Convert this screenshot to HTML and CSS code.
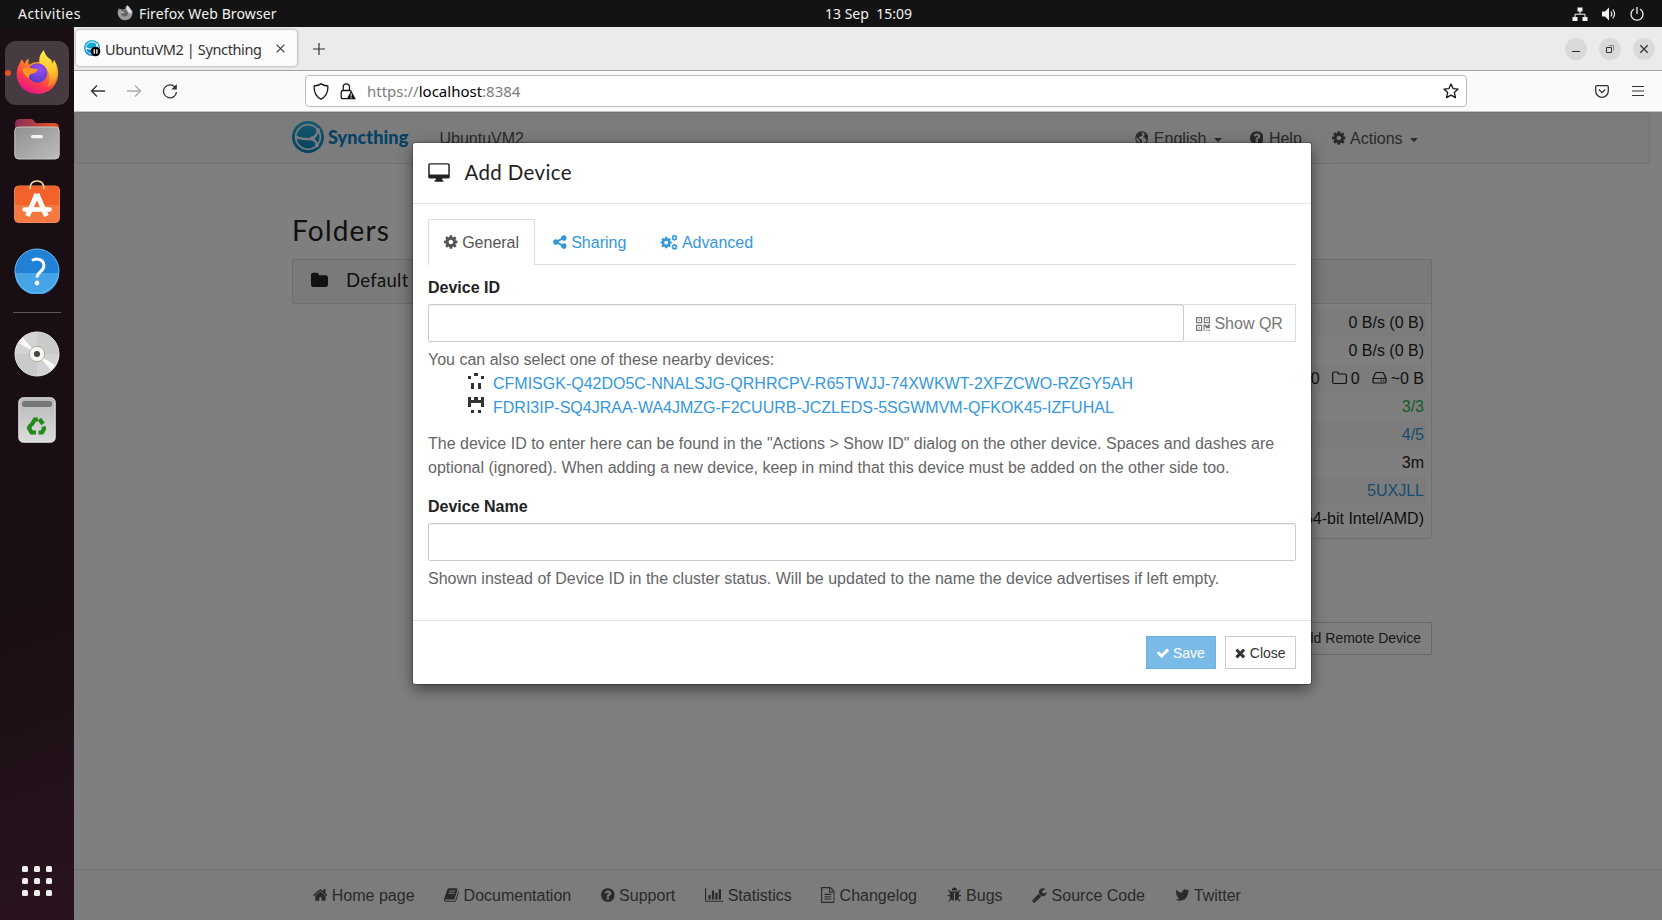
FILE: index.html
```html
<!DOCTYPE html>
<html lang="en">
<head>
<meta charset="utf-8">
<title>UbuntuVM2 | Syncthing</title>
<link rel="stylesheet" href="styles.css">
</head>
<body>
<svg class="defs" aria-hidden="true">
  <defs>
    <linearGradient id="syncBlue" gradientUnits="userSpaceOnUse" x1="0" y1="0" x2="0" y2="32"><stop offset="0" stop-color="#26b6db"/><stop offset="1" stop-color="#0882c8"/></linearGradient>
    <linearGradient id="foxBody" x1="0.8" y1="0" x2="0.3" y2="1"><stop offset="0" stop-color="#fff44f"/><stop offset=".35" stop-color="#ff9a1f"/><stop offset=".7" stop-color="#ff3d4a"/><stop offset="1" stop-color="#e0148c"/></linearGradient>
    <linearGradient id="foxFlame" x1="0" y1="0" x2="0" y2="1"><stop offset="0" stop-color="#fff04a"/><stop offset=".6" stop-color="#ffc02e"/><stop offset="1" stop-color="#ff7a2a"/></linearGradient>
    <radialGradient id="foxGlobe" cx=".6" cy=".3" r=".8"><stop offset="0" stop-color="#a04af5"/><stop offset="1" stop-color="#4a3cc0"/></radialGradient>
    <linearGradient id="folderBack" x1="0" y1="0" x2="1" y2="0"><stop offset="0" stop-color="#8a2c5a"/><stop offset="1" stop-color="#e9541f"/></linearGradient>
    <linearGradient id="folderFront" x1="0" y1="0" x2="1" y2="1"><stop offset="0" stop-color="#909090"/><stop offset="1" stop-color="#bcbcbc"/></linearGradient>
    <linearGradient id="trashBody" x1="0" y1="0" x2="0" y2="1"><stop offset="0" stop-color="#b8b8b8"/><stop offset="1" stop-color="#dcdcdc"/></linearGradient>
  </defs>
  <symbol id="cog" viewBox="128 0 1536 1792"><path d="M1152 896q0-106-75-181t-181-75-181 75-75 181 75 181 181 75 181-75 75-181zm512-109v222q0 12-8 23t-20 13l-185 28q-19 54-39 91 35 50 107 138 10 12 10 25t-9 23q-27 37-99 108t-94 71q-12 0-26-9l-138-108q-44 23-91 38-16 136-29 186-7 28-36 28h-222q-14 0-24.5-8.5t-11.5-21.5l-28-184q-49-16-90-37l-141 107q-10 9-25 9-14 0-25-11-126-114-165-168-7-10-7-23 0-12 8-23 15-21 51-66.5t54-70.5q-27-50-41-99l-183-27q-13-2-21-12.5t-8-23.5v-222q0-12 8-23t19-13l186-28q14-46 39-92-40-57-107-138-10-12-10-24 0-10 9-23 26-36 98.5-107.5t94.5-71.5q13 0 26 10l138 107q44-23 91-38 16-136 29-186 7-28 36-28h222q14 0 24.5 8.5t11.5 21.5l28 184q49 16 90 37l142-107q9-9 24-9 13 0 25 10 129 119 165 170 7 8 7 22 0 12-8 23-15 21-51 66.5t-54 70.5q26 50 41 98l183 28q13 2 21 12.5t8 23.5z"/></symbol>
  <symbol id="cogs" viewBox="0 0 1920 1792"><use href="#cog" x="0" y="210" width="1280" height="1493"/><use href="#cog" x="1230" y="20" width="690" height="805"/><use href="#cog" x="1230" y="1040" width="690" height="805"/></symbol>
  <symbol id="check" viewBox="121 0 1550 1792"><path d="M1671 566q0 40-28 68l-724 724-136 136q-28 28-68 28t-68-28l-136-136-362-362q-28-28-28-68t28-68l136-136q28-28 68-28t68 28l294 295 656-657q28-28 68-28t68 28l136 136q28 28 28 68z"/></symbol>
  <symbol id="times" viewBox="302 0 1188 1792"><path d="M1490 1322q0 40-28 68l-136 136q-28 28-68 28t-68-28l-294-294-294 294q-28 28-68 28t-68-28l-136-136q-28-28-28-68t28-68l294-294-294-294q-28-28-28-68t28-68l136-136q28-28 68-28t68 28l294 294 294-294q28-28 68-28t68 28l136 136q28 28 28 68t-28 68l-294 294 294 294q28 28 28 68z"/></symbol>
  <symbol id="question" viewBox="128 0 1536 1792"><path d="M1024 1376v-192q0-14-9-23t-23-9h-192q-14 0-23 9t-9 23v192q0 14 9 23t23 9h192q14 0 23-9t9-23zm256-672q0-88-55.5-163t-138.5-116-170-41q-243 0-371 213-15 24 8 42l132 100q7 6 19 6 16 0 25-12 53-68 86-92 34-24 86-24 48 0 85.5 26t37.5 59q0 38-20 61t-68 45q-63 28-115.5 86.5t-52.5 125.5v36q0 14 9 23t23 9h192q14 0 23-9t9-23q0-19 21.5-49.5t54.5-49.5q32-18 49-28.5t46-35 44.5-48 28-60.5 12.5-81zm384 192q0 209-103 385.5t-279.5 279.5-385.5 103-385.5-103-279.5-279.5-103-385.5 103-385.5 279.5-279.5 385.5-103 385.5 103 279.5 279.5 103 385.5z"/></symbol>
  <symbol id="home" viewBox="64 0 1664 1792"><path d="M1472 992v480q0 26-19 45t-45 19h-384v-384h-256v384h-384q-26 0-45-19t-19-45v-480q0-1 .5-3t.5-3l575-474 575 474q1 2 1 6zm223-69l-62 74q-8 9-21 11h-3q-13 0-21-7l-692-577-692 577q-12 8-24 7-13-2-21-11l-62-74q-8-10-7-23.5t11-21.5l719-599q32-26 76-26t76 26l244 204v-195q0-14 9-23t23-9h192q14 0 23 9t9 23v408l219 182q10 8 11 21.5t-7 23.5z"/></symbol>
  <symbol id="book" viewBox="64 0 1664 1792"><path d="M1703 478q40 57 18 129l-275 906q-19 64-76.5 107.5t-122.5 43.5h-923q-77 0-148.5-53.5t-99.5-131.5q-24-67-2-127 0-4 3-27t4-37q1-8-3-21.5t-3-19.5q2-11 8-21t16.5-23.5 16.5-23.5q23-38 45-91.5t30-91.5q3-10 .5-30t-.5-28q3-11 17-28t17-23q21-36 42-92t25-90q1-9-2.5-32t.5-28q4-13 22-30.5t22-22.5q19-26 42.5-84.5t27.5-96.5q1-8-3-25.5t-2-26.5q2-8 9-18t18-23 17-21q8-12 16.5-30.5t15-35 16-36 19.5-32 26.5-23.5 36-11.5 47.5 5.5l-1 3q38-9 51-9h761q74 0 114 56t18 130l-274 906q-36 119-71.5 153.5t-128.5 34.5h-869q-27 0-38 15-11 16-1 43 24 70 144 70h923q29 0 56-15.5t35-41.5l300-987q7-22 5-57 38 15 59 43zm-1064 2q-4 13 2 22.5t20 9.5h608q13 0 25.5-9.5t16.5-22.5l21-64q4-13-2-22.5t-20-9.5h-608q-13 0-25.5 9.5t-16.5 22.5zm-83 256q-4 13 2 22.5t20 9.5h608q13 0 25.5-9.5t16.5-22.5l21-64q4-13-2-22.5t-20-9.5h-608q-13 0-25.5 9.5t-16.5 22.5z"/></symbol>
  <symbol id="chart" viewBox="0 0 2048 1792"><path d="M640 896v512h-256v-512h256zm384-512v1024h-256v-1024h256zm1024 1152v128h-2048v-1536h128v1408h1920zm-640-896v768h-256v-768h256zm384-384v1152h-256v-1152h256z"/></symbol>
  <symbol id="filetext" viewBox="128 0 1536 1792"><path d="M1596 380q28 28 48 76t20 88v1152q0 40-28 68t-68 28h-1344q-40 0-68-28t-28-68v-1600q0-40 28-68t68-28h896q40 0 88 20t76 48zm-444-244v376h376q-10-29-22-41l-313-313q-12-12-41-22zm384 1528v-1024h-416q-40 0-68-28t-28-68v-416h-768v1536h1280zm-1024-864q0-14 9-23t23-9h704q14 0 23 9t9 23v64q0 14-9 23t-23 9h-704q-14 0-23-9t-9-23v-64zm736 224q14 0 23 9t9 23v64q0 14-9 23t-23 9h-704q-14 0-23-9t-9-23v-64q0-14 9-23t23-9h704zm0 256q14 0 23 9t9 23v64q0 14-9 23t-23 9h-704q-14 0-23-9t-9-23v-64q0-14 9-23t23-9h704z"/></symbol>
  <symbol id="bug" viewBox="64 0 1664 1792"><path d="M1696 960q0 26-19 45t-45 19h-224q0 171-67 290l208 209q19 19 19 45t-19 45q-18 19-45 19t-45-19l-198-197q-5 5-15 13t-42 28.5-65 36.5-82 29-97 13v-896h-128v896q-51 0-101.5-13.5t-87-33-66-39-43.5-32.5l-15-14-183 207q-20 21-48 21-24 0-43-16-19-18-20.5-44.5t15.5-46.5l202-227q-58-114-58-274h-224q-26 0-45-19t-19-45 19-45 45-19h224v-294l-173-173q-19-19-19-45t19-45 45-19 45 19l173 173h844l173-173q19-19 45-19t45 19 19 45-19 45l-173 173v294h224q26 0 45 19t19 45zm-480-576h-640q0-133 93.5-226.5t226.5-93.5 226.5 93.5 93.5 226.5z"/></symbol>
  <symbol id="wrench" viewBox="64 0 1664 1792"><path d="M448 1472q0-26-19-45t-45-19-45 19-19 45 19 45 45 19 45-19 19-45zm644-420l-682 682q-37 37-90 37-52 0-91-37l-106-108q-38-36-38-90 0-53 38-91l681-681q39 98 114.5 173.5t173.5 114.5zm634-435q0 39-23 106-47 134-164.5 217.5t-258.5 83.5q-185 0-316.5-131.5t-131.5-316.5 131.5-316.5 316.5-131.5q58 0 121.5 16.5t107.5 46.5q16 11 16 28t-16 28l-293 169v224l193 107q5-3 79-48.5t135.5-81 70.5-35.5q15 0 23.5 10t8.5 25z"/></symbol>
  <symbol id="twitter" viewBox="64 0 1664 1792"><path d="M1684 408q-67 98-162 167 1 14 1 42 0 130-38 259.5t-115.5 248.5-184.5 210.5-258 146-323 54.5q-271 0-496-145 35 4 78 4 225 0 401-138-105-2-188-64.5t-114-159.5q33 5 61 5 43 0 85-11-112-23-185.5-111.5t-73.5-205.5v-4q68 38 146 41-66-44-105-115t-39-154q0-88 44-163 121 149 294.5 238.5t371.5 99.5q-8-38-8-74 0-134 94.5-228.5t228.5-94.5q140 0 236 102 109-21 205-78-37 115-142 178 93-10 186-50z"/></symbol>
  <symbol id="share" viewBox="128 0 1536 1792"><path d="M1344 1024q133 0 226.5 93.5t93.5 226.5-93.5 226.5-226.5 93.5-226.5-93.5-93.5-226.5q0-12 2-34l-360-180q-92 86-218 86-133 0-226.5-93.5t-93.5-226.5 93.5-226.5 226.5-93.5q126 0 218 86l360-180q-2-22-2-34 0-133 93.5-226.5t226.5-93.5 226.5 93.5 93.5 226.5-93.5 226.5-226.5 93.5q-126 0-218-86l-360 180q2 22 2 34t-2 34l360 180q92-86 218-86z"/></symbol>
  <symbol id="folder" viewBox="64 0 1664 1792"><path d="M1728 608v704q0 92-66 158t-158 66h-1216q-92 0-158-66t-66-158v-960q0-92 66-158t158-66h320q92 0 158 66t66 158v32h672q92 0 158 66t66 158z"/></symbol>
  <symbol id="globe" viewBox="0 0 14 16"><circle cx="7" cy="8" r="6.200" fill="none" stroke="currentColor" stroke-width="1.200"/><path d="M2 4.500 4.500 2l3 .3-.5 1.500 1 1-1.500 1.400-2 .6L4 8.500l2.200.8 1.300 1.400-.7 1.800-.8 1.500-1-2.500L3.500 9 1.300 7ZM9 2.500l3 2 1 2.500-.6 2.500-1.200.8-.7-2.300L8.800 7.500 8.600 5.800 10 4.800Z"/></symbol>
  <symbol id="folder-o" viewBox="0 0 16 16"><path d="M.7 3.400Q.7 2 2.100 2H5q1.400 0 1.400 1.400v.6H13q1.400 0 1.400 1.400v6.700q0 1.400-1.400 1.400H2.100Q.7 13.500.7 12.100Z" fill="none" stroke="currentColor" stroke-width="1.200"/></symbol>
  <symbol id="hdd" viewBox="0 0 16 16"><path d="M1 8.500 3.400 3.200Q3.700 2.500 4.500 2.500h6q.8 0 1.100.7L14 8.500v3.400q0 1.100-1.100 1.100H2.100Q1 13 1 11.900ZM1 8.500h13" fill="none" stroke="currentColor" stroke-width="1.200"/><circle cx="9.200" cy="10.800" r=".8"/><circle cx="11.700" cy="10.800" r=".8"/></symbol>
  <symbol id="sync" viewBox="0 0 32 32"><circle cx="16" cy="16" r="16" fill="url(#syncBlue)"/><circle cx="16" cy="16" r="12.300" fill="none" stroke="#f8f8f8" stroke-width="1.700"/><path d="M20.500 17.600Q12 19.300 4.300 16M20.500 17.600Q25.500 14 26.300 8.500M20.500 17.600Q24.500 20.500 25.500 25" fill="none" stroke="#f8f8f8" stroke-width="2.300"/><g fill="#f8f8f8"><circle cx="20.300" cy="17.600" r="2.300"/><circle cx="26" cy="8.800" r="1.900"/><circle cx="24.800" cy="24.500" r="1.900"/><circle cx="5" cy="16.500" r="1.700"/></g></symbol>
  <symbol id="firefox" viewBox="0 0 44 46"><path d="M3.500 14 6 9.500l3 4.500q1-4 4-5l-.3 6Q18 12 24 12q-1-6 4-11 3 6 8 9l2 4 1-4q5 8 4 17Q40 43 23 45 6 45 1.500 30-1 21 3.500 14Z" fill="url(#foxBody)"/><path d="M28.500 0q1 6 7 11l2 5 .8-5q4.500 8 3.200 17-3 8-10 10 5-8 1.500-16-3-5-8-7-3-8 3.500-15Z" fill="url(#foxFlame)"/><circle cx="22" cy="23.500" r="10" fill="url(#foxGlobe)"/><path d="M6.500 20q4-3 9-1.500l7 1.500q-1 3.500-7 4.500-3 1.500-2 4.500-5-2-7-9Z" fill="#ff961f"/></symbol>
</svg>

<header class="topbar">
  <span class="activities">Activities</span>
  <svg class="app-icon" viewBox="0 0 44 46"><path d="M3 12 5 9l2.500 4L12 10v5q4-3 11-4-1-6 6-10 2 6 7 9l4 5 2-2q3 7 1 15Q39 43 23 44 7 44 2 29-1 20 3 12Z" fill="#999"/><circle cx="21" cy="23" r="10" fill="#666"/><path d="M29 1q14 12 11 24l-8-3q-9-7-3-21Z" fill="#ddd"/><path d="M7 20q5-3 15 0-3 4-9 4Z" fill="#bbb"/></svg>
  <span class="app-name">Firefox Web Browser</span>
  <span class="clock">13 Sep&nbsp; 15:09</span>
  <span class="tray">
    <svg width="16" height="16" viewBox="0 0 16 16"><path d="M5.500 1.500h5v4h-5ZM.5 11h5v4h-5ZM10.500 11h5v4h-5Z" fill="#f2f2f2"/><path d="M8 5v3M3 11V8.200h10V11" fill="none" stroke="#f2f2f2"/></svg>
    <svg width="16" height="16" viewBox="0 0 16 16"><path d="M1 5.500h3L8 1.500v13l-4-4H1Z" fill="#f2f2f2"/><path d="M9.800 5.500q2 2.500 0 5M11.800 3.500q3.500 4.500 0 9" fill="none" stroke="#f2f2f2" stroke-width="1.200"/></svg>
    <svg width="16" height="16" viewBox="0 0 16 16"><path d="M5 3A6 6 0 1 0 11 3M8 1v7" fill="none" stroke="#f2f2f2" stroke-width="1.300"/></svg>
  </span>
</header>

<div class="desktop">
  <nav class="dock">
    <div class="launcher running"><svg class="fox"><use href="#firefox"/></svg></div>
    <svg class="dock-icon files" viewBox="0 0 46 42"><path d="M1 6q0-5 5-5h12l4 4h18q5 0 5 5v15H1Z" fill="url(#folderBack)"/><rect x=".8" y="9" width="44.400" height="32" rx="4" fill="url(#folderFront)" stroke="#c8c8c8"/><rect x="17" y="17" width="12" height="3.200" rx="1.500" fill="#f4f4f4"/></svg>
    <svg class="dock-icon store" viewBox="0 0 46 43"><rect x=".6" y="6" width="44.800" height="36.500" rx="4" fill="#f4783f" stroke="#f58d62"/><path d="M1 25V10q0-4 4-4h36q4 0 4 4v15Z" fill="#f3622b"/><path d="M16 9q0-8 7-8t7 8" fill="none" stroke="#f8d9a0" stroke-width="1.600"/><path d="M22.900 14 13.500 36M22.900 14l9.500 22" fill="none" stroke="#fff" stroke-width="5"/><path d="M10.500 29.500h25" stroke="#fff" stroke-width="4.500" stroke-linecap="round"/></svg>
    <svg class="dock-icon help" viewBox="0 0 46 46"><circle cx="23" cy="23" r="22" fill="#2181d6"/><path d="M1 25a22 22 0 0 0 44 0Z" fill="#45a3e7"/><circle cx="23" cy="23" r="22" fill="none" stroke="#69bbf2"/><path d="M18 12.500q3-1.700 6-1.300 5.500.6 6 6 0 3.500-3.600 6.500-3.400 3-3.400 5.800" fill="none" stroke="#fff" stroke-width="3"/><circle cx="23" cy="35" r="2.400" fill="#fff"/></svg>
    <hr class="dock-rule">
    <svg class="dock-icon disc" viewBox="0 0 46 46"><circle cx="23" cy="23" r="22" fill="#d3d3d3" stroke="#eee"/><path d="M23 23V1A22 22 0 0 1 45 23ZM23 23v22A22 22 0 0 1 1 23Z" fill="#cacaca"/><path d="m23 23-18-11q1.500-3 4-5Zm0 0 18 11q-1.500 3-4 5Z" fill="#fafafa"/><circle cx="23" cy="23" r="7.700" fill="#f6f6f4" stroke="#b7ac9b"/><circle cx="23" cy="23" r="3" fill="#444"/></svg>
    <svg class="dock-icon trash" viewBox="0 0 38 46"><rect x=".8" y=".8" width="36.400" height="44.400" rx="4.500" fill="url(#trashBody)" stroke="#ececec"/><rect x="4" y="4" width="30" height="6" rx="2.500" fill="#777"/><g fill="none" stroke="#208a1b" stroke-width="4.200"><path d="m13.500 28 3.200-5.500h3.200M21.500 22l3.500 5M25.500 29.500 26 32l-2 3.500h-3.500M18 35.500h-4.500L11 31l2-3.500"/></g></svg>
    <div class="apps"><i></i><i></i><i></i><i></i><i></i><i></i><i></i><i></i><i></i></div>
  </nav>

  <main class="browser">
    <div class="tabstrip">
      <div class="tab">
        <svg class="favicon" viewBox="0 0 17 17"><use href="#sync" width="16" height="16"/><circle cx="11.500" cy="11.500" r="4.800" fill="#000"/><path d="M10.200 9.200v4.600M12.900 9.200v4.600" stroke="#fff" stroke-width="1.300"/></svg>
        <span class="tab-title">UbuntuVM2 | Syncthing</span>
        <svg class="tab-close" viewBox="0 0 9 9"><path d="m.6.6 7.800 7.800M8.400.6.6 8.400" stroke="#333" stroke-width="1.100"/></svg>
      </div>
      <svg class="newtab" viewBox="0 0 12 12"><path d="M6 0v12M0 6h12" stroke="#333" stroke-width="1.200"/></svg>
      <div class="winbtns">
        <span><svg viewBox="0 0 22 22"><path d="M7 13.500h8" stroke="#333"/></svg></span>
        <span><svg viewBox="0 0 22 22"><path d="M7.500 9.500h5v5h-5Z" fill="none" stroke="#333"/><path d="M9.500 7.500h5v5" fill="none" stroke="#888"/></svg></span>
        <span><svg viewBox="0 0 22 22"><path d="m7.300 7.300 7.400 7.400M14.700 7.300l-7.400 7.400" stroke="#333" stroke-width="1.300"/></svg></span>
      </div>
    </div>
    <div class="toolbar">
      <svg class="tb back" viewBox="0 0 16 16"><path d="M15 8H1.500M7 2.500 1.500 8 7 13.500" fill="none" stroke="#333" stroke-width="1.300"/></svg>
      <svg class="tb fwd" viewBox="0 0 16 16"><path d="M1 8h13.500M9 2.500 14.500 8 9 13.500" fill="none" stroke="#aaa" stroke-width="1.300"/></svg>
      <svg class="tb reload" viewBox="0 0 16 16"><path d="M12.800 3.900A6.500 6.500 0 1 0 14.500 9" fill="none" stroke="#333" stroke-width="1.300"/><path d="M14.800 1v5.500H9.300Z" fill="#333"/></svg>
      <div class="urlbar">
        <svg class="shield" viewBox="0 0 16 17"><path d="M8 .9Q10.500 2.700 14.800 3 15.500 12.500 8 16.200.5 12.500 1.200 3 5.500 2.700 8 .9Z" fill="none" stroke="#15141a" stroke-width="1.300"/></svg>
        <svg class="lock" viewBox="0 0 16 17"><path d="M7 15.700H3q-1.800 0-1.800-1.800V9.300q0-1.800 1.800-1.800h6.500q1 0 1.600.8M3.200 7.500V4.300Q3.200.8 6.300.8t3.200 3.500v3.200" fill="none" stroke="#15141a" stroke-width="1.300"/><path d="m11.200 7.500 4.600 8.700H6.600Z" fill="#15141a"/><path d="M11.200 10.500v3M11.200 14.200v1.100" stroke="#fff"/></svg>
        <span class="url">https://<b>localhost</b>:8384</span>
        <svg class="star" viewBox="0 0 16 16"><path d="m8 1 2.100 4.600 5 .5-3.800 3.300 1.200 5.200L8 12.100l-4.500 2.500 1.200-5.200L.9 6.100l5-.5Z" fill="none" stroke="#15141a" stroke-width="1.300" stroke-linejoin="round"/></svg>
      </div>
      <svg class="pocket" viewBox="0 0 14 13"><path d="M2 .7h10q1.300 0 1.300 1.300v4q0 2.600-1.900 4.500Q9.600 12.300 7 12.300t-4.400-1.800Q.7 8.600.7 6V2Q.7.700 2 .7ZM3.800 4.500 7 7.600l3.200-3.100" fill="none" stroke="#333" stroke-width="1.300"/></svg>
      <svg class="menu" viewBox="0 0 12 10"><path d="M0 .5h12M0 5h12M0 9.500h12" stroke="#333"/></svg>
    </div>

    <section class="page">
      <div class="navbar">
        <svg class="logo"><use href="#sync"/></svg>
        <span class="brand">Syncthing</span>
        <span class="device">UbuntuVM2</span>
        <span class="navlinks">
          <span class="n1"><svg class="fa w14"><use href="#globe"/></svg> English <i class="caret"></i></span>
          <span class="n2"><svg class="fa w14"><use href="#question"/></svg> Help</span>
          <span class="n3"><svg class="fa w14"><use href="#cog"/></svg> Actions <i class="caret"></i></span>
        </span>
      </div>

      <div class="columns">
        <div class="col-left">
          <h3>Folders</h3>
          <div class="panel-head"><svg class="folder-icon"><use href="#folder"/></svg><span>Default</span></div>
        </div>
        <div class="col-right">
          <div class="panel">
            <div class="panel-head"></div>
            <div class="rows">
              <div>0 B/s (0 B)</div>
              <div>0 B/s (0 B)</div>
              <div class="state"><span>0</span><span><svg class="st"><use href="#folder-o"/></svg>0</span><span><svg class="st"><use href="#hdd"/></svg>~0 B</span></div>
              <div class="green">3/3</div>
              <div class="link">4/5</div>
              <div>3m</div>
              <div class="link">5UXJLL</div>
              <div>(64-bit Intel/AMD)</div>
            </div>
          </div>
          <button class="btn add">Add Remote Device</button>
        </div>
      </div>

      <footer class="footer">
        <span><svg class="fa w15"><use href="#home"/></svg> Home page</span>
        <span><svg class="fa w15"><use href="#book"/></svg> Documentation</span>
        <span><svg class="fa w14"><use href="#question"/></svg> Support</span>
        <span><svg class="fa w18"><use href="#chart"/></svg> Statistics</span>
        <span><svg class="fa w14"><use href="#filetext"/></svg> Changelog</span>
        <span><svg class="fa w15"><use href="#bug"/></svg> Bugs</span>
        <span><svg class="fa w15"><use href="#wrench"/></svg> Source Code</span>
        <span><svg class="fa w15"><use href="#twitter"/></svg> Twitter</span>
      </footer>

      <div class="backdrop">
        <div class="modal">
          <div class="modal-head">
            <svg class="desk" viewBox="0 0 22 19"><path d="M2 .2h18q1.800 0 1.800 1.700v12q0 1.700-1.800 1.700h-6l.6 2h.9v1.200H6.500v-1.200h.9l.6-2H2Q.2 15.600.2 13.900v-12Q.2.2 2 .2ZM1.700 1.900v9.500h18.600V1.900Q20.300 1.500 20 1.500H2Q1.700 1.500 1.700 1.900Z" fill="#222" fill-rule="evenodd"/></svg>
            <span>Add Device</span>
          </div>
          <div class="modal-body">
            <div class="tabs">
              <span class="active"><svg class="fa w14"><use href="#cog"/></svg> General</span>
              <span><svg class="fa w14"><use href="#share"/></svg> Sharing</span>
              <span><svg class="fa w17"><use href="#cogs"/></svg> Advanced</span>
            </div>
            <label class="first">Device ID</label>
            <div class="group">
              <div class="input"></div>
              <div class="qr"><svg class="qr-icon" viewBox="0 0 14 14"><g fill="none" stroke="currentColor"><path d="M.6.6h5v5h-5ZM8.400.6h5v5h-5ZM.6 8.400h5v5h-5Z" stroke-width="1.200"/></g><path d="M2.400 2.400h1.400v1.400H2.400ZM10.200 2.400h1.400v1.400h-1.400ZM2.400 10.200h1.400v1.400H2.400ZM7.500 7.500h2.800v1h1.600v-1h2v3.800h-4v-1.500H8.500v4.200h-1ZM10 12.700h1.200V14H10ZM12.500 12.700H14V14h-1.500Z"/></svg> Show QR</div>
            </div>
            <p class="help">You can also select one of these nearby devices:</p>
            <ul class="nearby">
              <li><svg viewBox="0 0 5 5" shape-rendering="crispEdges"><path d="M2 0h1v1H2ZM0 1h1v1H0ZM4 1h1v1H4ZM1 3h1v2H1ZM3 3h1v2H3Z"/></svg><a>CFMISGK-Q42DO5C-NNALSJG-QRHRCPV-R65TWJJ-74XWKWT-2XFZCWO-RZGY5AH</a></li>
              <li><svg viewBox="0 0 5 5" shape-rendering="crispEdges"><path d="M0 0h1v1h1v0h1V0h0v1h1V0h1v3H4V2H1v1H0ZM1 4h1v1H1ZM3 4h1v1H3Z"/><path d="M2 0h1v1H2Z"/></svg><a>FDRI3IP-SQ4JRAA-WA4JMZG-F2CUURB-JCZLEDS-5SGWMVM-QFKOK45-IZFUHAL</a></li>
            </ul>
            <p class="help desc">The device ID to enter here can be found in the "Actions &gt; Show ID" dialog on the other device. Spaces and dashes are optional (ignored). When adding a new device, keep in mind that this device must be added on the other side too.</p>
            <label>Device Name</label>
            <div class="input"></div>
            <p class="help">Shown instead of Device ID in the cluster status. Will be updated to the name the device advertises if left empty.</p>
          </div>
          <div class="modal-foot">
            <button class="btn save"><svg class="fb w12"><use href="#check"/></svg> Save</button>
            <button class="btn close"><svg class="fb w11"><use href="#times"/></svg> Close</button>
          </div>
        </div>
      </div>
    </section>
  </main>
</div>
</body>
</html>
```
FILE: styles.css
```css
* { box-sizing: border-box; }
html, body { margin: 0; height: 920px; overflow: hidden; }
body { width: 1662px; display: flex; flex-direction: column; font: 16px/24px "Liberation Sans", Arial, sans-serif; color: #222; }
svg { flex: none; }
.defs { position: absolute; width: 0; height: 0; }

/* system bar */
.topbar { height: 27px; flex: none; background: #131313; color: #f2f2f2; display: flex; align-items: center; font: 14px/27px "Noto Sans", sans-serif; position: relative; white-space: nowrap; }
.activities { width: 99px; padding-left: 18px; letter-spacing: .45px; }
.app-icon { width: 16px; height: 16px; margin: 0 6px 2px 18px; }
.app-name { letter-spacing: .12px; }
.clock { position: absolute; left: 825px; top: 0; }
.tray { margin-left: auto; display: flex; gap: 12.500px; margin-right: 17px; }

.desktop { flex: 1; display: flex; min-height: 0; }
.dock { width: 74px; background: linear-gradient(160deg, #180e13 60%, #29131f); display: flex; flex-direction: column; align-items: center; position: relative; padding-top: 14px; }
.launcher { width: 64px; height: 64px; border-radius: 11px; background: #453b40; display: flex; align-items: center; justify-content: center; position: relative; }
.launcher::before { content: ""; position: absolute; left: 0; top: 29px; width: 6px; height: 6px; border-radius: 50%; background: #e95420; }
.fox { width: 43px; height: 45px; margin-top: -2px; }
.dock-icon { display: block; width: 46px; }
.files { height: 42px; margin-top: 13px; }
.store { height: 43px; margin-top: 20px; }
.help.dock-icon { height: 46px; margin: 25px 0 0; }
.dock-rule { width: 48px; height: 1px; border: 0; background: #5c5558; margin: 18px 0 0; }
.disc { height: 46px; margin-top: 18px; }
.trash { width: 38px; height: 46px; margin-top: 20px; }
.apps { margin-top: auto; margin-bottom: 24px; display: grid; grid-template-columns: repeat(3, 6px); gap: 6px; }
.apps i { width: 6px; height: 6px; border-radius: 1.500px; background: #f0eeec; }

/* browser chrome */
.browser { flex: 1; display: flex; flex-direction: column; min-width: 0; }
.tabstrip { height: 44px; background: #ebebeb; border-bottom: 1px solid #a2a2a2; display: flex; align-items: center; padding-left: 2px; font: 14.500px/36px "Noto Sans", sans-serif; letter-spacing: -.37px; color: #333; white-space: nowrap; }
.tab { width: 221px; height: 36px; margin-top: -1px; background: #fbfbfb; border-radius: 4px; box-shadow: 0 0 3px rgba(0,0,0,.4); display: flex; align-items: center; padding: 0 12px 0 8px; }
.favicon { width: 17px; height: 17px; margin-right: 4px; }
.tab-title { flex: 1; padding-top: 1px; }
.tab-close { width: 9px; height: 9px; }
.newtab { width: 12px; height: 12px; margin-left: 16px; }
.winbtns { margin-left: auto; display: flex; gap: 12px; margin-right: 7px; }
.winbtns span { width: 22px; height: 22px; border-radius: 50%; background: #d9d9d9; }
.winbtns svg { display: block; width: 22px; height: 22px; }
.toolbar { height: 41px; background: #fafafa; border-bottom: 1px solid #c4c4c4; display: flex; align-items: center; }
.tb { width: 16px; height: 16px; }
.back { margin-left: 16px; }
.fwd { margin-left: 20px; }
.reload { margin-left: 20px; }
.urlbar { width: 1162px; height: 32px; margin-left: 127px; background: #fff; border: 1px solid #bdbdbd; border-radius: 4px; display: flex; align-items: center; padding: 0 7px; font: 15px/30px "Noto Sans", sans-serif; color: #7d7d7d; }
.urlbar b { color: #000; font-weight: 400; }
.shield, .lock { width: 16px; height: 17px; }
.lock { margin-left: 11px; margin-right: 11px; }
.star { width: 16px; height: 16px; margin-left: auto; }
.pocket { width: 14px; height: 13px; margin-left: 128px; }
.menu { width: 12px; height: 10px; margin-left: 23px; }

/* web page */
.page { flex: 1; position: relative; overflow: hidden; background: #fff; display: flex; flex-direction: column; }
.navbar { height: 52px; flex: none; width: 1576px; background: #f8f8f8; border: 1px solid #e7e7e7; border-radius: 2px; display: flex; padding-left: 217px; color: #555; line-height: 52px; position: relative; }
.logo { width: 32px; height: 32px; margin-top: 8px; }
.brand { width: 115.500px; padding-left: 4px; font: 900 18px/48px Lato, sans-serif; color: #0882c8; letter-spacing: .1px; }
.navlinks { display: flex; margin-left: auto; margin-right: 231px; }
.navlinks .fa { margin-right: 1px; }
.n2 { margin-left: 28px; }
.n3 { margin-left: 30px; }
.fa { height: 16px; vertical-align: -2px; fill: currentColor; color: inherit; }
.w14 { width: 13.700px; } .w15 { width: 14.860px; } .w17 { width: 18px; } .w18 { width: 18.300px; }
.caret { display: inline-block; vertical-align: middle; margin-left: 3px; border-top: 4px solid; border-left: 4px solid transparent; border-right: 4px solid transparent; }
.columns { display: flex; flex: 1; width: 1140px; margin-left: 218px; justify-content: space-between; }
.col-left, .col-right { width: 555px; }
h3 { font: 400 28px/30px Lato, sans-serif; letter-spacing: 1.200px; margin: 51px 0 14px; }
.panel-head { height: 45px; background: #f5f5f5; border: 1px solid #ddd; border-radius: 2px 2px 0 0; display: flex; align-items: center; font: 18.500px/41px Lato, sans-serif; letter-spacing: .3px; padding-left: 18px; }
.panel-head span { margin-top: -2px; }
.folder-icon { width: 17px; height: 19px; margin-right: 18px; margin-top: -2px; fill: #222; }
.col-right { padding-top: 95px; text-align: right; }
.panel { border: 1px solid #ddd; border-radius: 2px; height: 280px; }
.panel .panel-head { height: 44px; border-width: 0 0 1px; }
.rows { padding: 5px; }
.rows > div { height: 28px; line-height: 27px; padding-right: 2px; }
.rows > div:nth-child(odd) { background: #f9f9f9; }
.rows .green { color: #29b74e; }
.rows .link { color: #3498db; }
.state { display: flex; justify-content: flex-end; gap: 12px; }
.st { width: 16px; height: 16px; margin-right: 3px; vertical-align: -2px; fill: currentColor; }
.btn { height: 33px; border: 1px solid #ccc; background: #fff; font: 14px/31px "Liberation Sans", Arial, sans-serif; color: #333; padding: 0 10px; white-space: nowrap; }
.add { margin-top: 83px; }
.footer { height: 51px; flex: none; border-top: 1px solid #e7e7e7; background: #f8f8f8; padding-left: 238.500px; display: flex; gap: 29.780px; color: #555; line-height: 51px; white-space: nowrap; }

/* dialog */
.backdrop { position: absolute; inset: 0; background: rgba(0,0,0,.5); }
.modal { position: absolute; left: 339px; top: 31px; width: 898px; height: 541px; background: #fff; border-radius: 2px; box-shadow: 0 5px 15px rgba(0,0,0,.5), 0 0 0 1px rgba(0,0,0,.2); display: flex; flex-direction: column; }
.modal-head { height: 61px; border-bottom: 1px solid #e5e5e5; display: flex; align-items: center; padding-left: 15px; font: 20.500px/58px Lato, sans-serif; letter-spacing: .35px; }
.modal-head span { margin-top: -2px; }
.desk { width: 22px; height: 19px; margin-right: 14.500px; margin-top: -2px; }
.modal-body { flex: 1; padding: 15px 15px 0; }
.tabs { height: 46px; border-bottom: 1px solid #ddd; display: flex; }
.tabs span { padding: 12px 16px 10px; height: 46px; color: #3498db; margin-right: 2px; }
.tabs .active { color: #555; background: #fff; border: 1px solid #ddd; border-bottom: 0; border-radius: 2px 2px 0 0; padding: 11px 15px; }
label { display: block; font-weight: 700; margin-bottom: 4px; }
.first { padding-top: 11px; }
.group { display: flex; }
.input { flex: 1; height: 38px; border: 1px solid #ccc; border-radius: 2px; box-shadow: inset 0 1px 1px rgba(0,0,0,.075); }
.qr { width: 112px; height: 38px; border: 1px solid #ddd; border-left: 0; color: #777; padding: 7px 0 0 12px; line-height: 24px; white-space: nowrap; }
.qr-icon { width: 14px; height: 14px; vertical-align: -2px; fill: currentColor; }
p.help { margin: 6px 0 0; color: #666; }
.nearby { list-style: none; margin: 0 0 12px; padding: 0 0 0 40px; color: #3498db; }
.nearby li { display: flex; height: 24px; white-space: nowrap; }
.nearby svg { width: 16px; height: 16px; margin: 1px 9px 0 0; fill: #333; }
p.desc { margin: 0 0 15px; }
.modal-foot { height: 64px; border-top: 1px solid #e5e5e5; display: flex; justify-content: flex-end; gap: 9px; padding: 15px; }
.modal-foot .btn { padding: 1px 0 0; }
.save { background: #7abae6; border-color: #6cb1e3; color: #fff; width: 70px; }
.close { width: 71px; }
.fb { height: 14px; vertical-align: -2px; fill: currentColor; }
.w12 { width: 12px; } .w11 { width: 10.500px; }
```
